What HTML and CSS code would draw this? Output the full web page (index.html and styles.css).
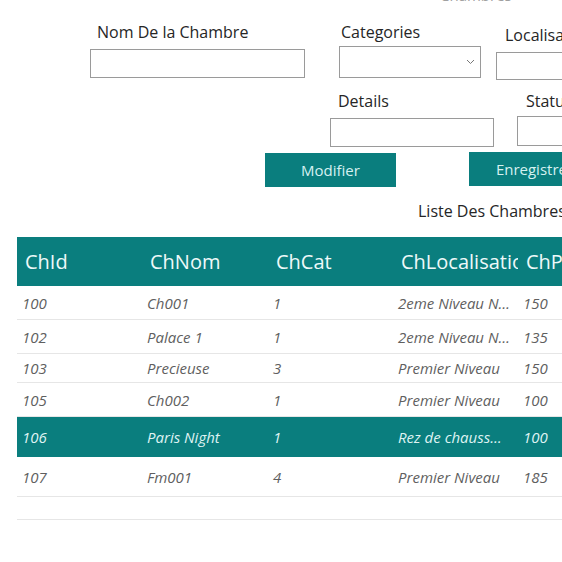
FILE: index.html
```html
<!DOCTYPE html>
<html lang="fr">
<head>
<meta charset="utf-8">
<title>Chambres</title>
<link rel="stylesheet" href="styles.css">
</head>
<body>
<div class="page">
  <div class="title">Chambres</div>

  <div class="row row1">
    <div class="field f-nom">
      <label class="lbl">Nom De la Chambre</label>
      <input class="inp" type="text">
    </div>
    <div class="field f-cat">
      <label class="lbl">Categories</label>
      <div class="select">
        <svg class="chev" width="9" height="6" viewBox="0 0 9 6"><path d="M1 1 L4.5 4.5 L8 1" fill="none" stroke="#777" stroke-width="1"/></svg>
      </div>
    </div>
    <div class="field f-loc">
      <label class="lbl">Localisation</label>
      <input class="inp" type="text">
    </div>
  </div>

  <div class="row row2">
    <div class="field f-det">
      <label class="lbl">Details</label>
      <input class="inp" type="text">
    </div>
    <div class="field f-stat">
      <label class="lbl">Status</label>
      <input class="inp" type="text">
    </div>
  </div>

  <div class="row row3">
    <button class="btn btn-mod">Modifier</button>
    <button class="btn btn-enr">Enregistrer</button>
  </div>

  <div class="list-title">Liste Des Chambres</div>

  <table class="grid">
    <colgroup>
      <col class="c1"><col class="c2"><col class="c3"><col class="c4"><col class="c5">
    </colgroup>
    <thead>
      <tr><th>ChId</th><th>ChNom</th><th>ChCat</th><th>ChLocalisation</th><th>ChPrix</th></tr>
    </thead>
    <tbody>
      <tr class="r-a"><td>100</td><td>Ch001</td><td>1</td><td>2eme Niveau Nord</td><td>150</td></tr>
      <tr class="r-a"><td>102</td><td>Palace 1</td><td>1</td><td>2eme Niveau Nord</td><td>135</td></tr>
      <tr class="r-b"><td>103</td><td>Precieuse</td><td>3</td><td>Premier Niveau</td><td>150</td></tr>
      <tr class="r-a"><td>105</td><td>Ch002</td><td>1</td><td>Premier Niveau</td><td>100</td></tr>
      <tr class="r-c sel"><td>106</td><td>Paris Night</td><td>1</td><td class="tight">Rez de chaussée</td><td>100</td></tr>
      <tr class="r-c"><td>107</td><td>Fm001</td><td>4</td><td>Premier Niveau</td><td>185</td></tr>
      <tr class="r-d"><td></td><td></td><td></td><td></td><td></td></tr>
    </tbody>
  </table>
</div>
</body>
</html>
```

FILE: styles.css
```css
html, body {
  margin: 0;
  padding: 0;
  background: #ffffff;
  overflow: hidden;
}
body {
  width: 562px;
  height: 562px;
  font-family: "Open Sans", "Liberation Sans", sans-serif;
  color: #222;
}
.page {
  width: 760px;
}
.title {
  height: 6px;
  line-height: 14px;
  margin-top: -12px;
  padding-left: 440px;
  font-size: 15px;
  color: #a0a0a0;
}

.row {
  display: flex;
  align-items: flex-start;
}
.field {
  display: flex;
  flex-direction: column;
}
.lbl {
  font-size: 16px;
  line-height: 20px;
  height: 20px;
  color: #262626;
  white-space: nowrap;
}
.inp {
  box-sizing: border-box;
  margin: 0;
  padding: 0 4px;
  border: 1px solid #9a9a9a;
  background: #fff;
  font: inherit;
  outline: none;
}

.row1 {
  margin-top: 28px;
  padding-left: 90px;
}
.f-nom .lbl { padding-left: 7px; }
.f-nom .inp { margin-top: 7px; width: 215px; height: 29px; }
.f-cat { margin-left: 34px; }
.f-cat .lbl { padding-left: 2px; }
.select {
  box-sizing: border-box;
  margin-top: 4px;
  width: 142px;
  height: 32px;
  border: 1px solid #9a9a9a;
  display: flex;
  align-items: center;
  justify-content: flex-end;
  padding-right: 5px;
}
.chev { display: block; }
.f-loc { margin-left: 15px; margin-top: 3px; }
.f-loc .lbl { padding-left: 9px; }
.f-loc .inp { margin-top: 7px; width: 160px; height: 28px; }

.row2 {
  margin-top: 11px;
  padding-left: 330px;
}
.f-det .lbl { padding-left: 8px; }
.f-det .inp { margin-top: 7px; width: 164px; height: 29px; }
.f-stat { margin-left: 23px; }
.f-stat .lbl { padding-left: 9px; }
.f-stat .inp { margin-top: 5px; width: 160px; height: 30px; }

.row3 {
  margin-top: 5px;
  padding-left: 265px;
}
.btn {
  box-sizing: border-box;
  margin: 0;
  border: none;
  background: #0a7e7e;
  color: #d6f1f1;
  font-family: inherit;
  font-size: 15px;
  height: 34px;
  width: 131px;
  padding: 0;
}
.btn-mod { margin-top: 1px; }
.btn-enr { margin-left: 73px; }

.list-title {
  margin-top: 14px;
  padding-left: 418px;
  font-size: 16px;
  line-height: 20px;
  color: #262626;
}

.grid {
  margin-top: 16px;
  margin-left: 17px;
  border-collapse: collapse;
  table-layout: fixed;
  width: 640px;
}
.c1 { width: 125px; }
.c2 { width: 126px; }
.c3 { width: 125px; }
.c4 { width: 125px; }
.c5 { width: 139px; }
.grid th {
  height: 49px;
  padding: 0 0 0 8px;
  background: #0a7e7e;
  color: #eef9f9;
  font-weight: normal;
  font-size: 20px;
  text-align: left;
  white-space: nowrap;
  overflow: hidden;
  text-overflow: clip;
}
.grid td {
  padding: 0 6px 0 5px;
  font-size: 15px;
  font-style: italic;
  color: #5f5f5f;
  white-space: nowrap;
  overflow: hidden;
  text-overflow: ellipsis;
  border-bottom: 1px solid #e6e6e6;
}
.grid td.tight { padding-right: 16px; }
.r-a td { height: 33px; }
.r-b td { height: 28px; }
.r-c td { height: 39px; }
.r-d td { height: 22px; }
.sel td {
  background: #0a7e7e;
  color: #dff3f3;
  border-bottom-color: #0a7e7e;
}
```
